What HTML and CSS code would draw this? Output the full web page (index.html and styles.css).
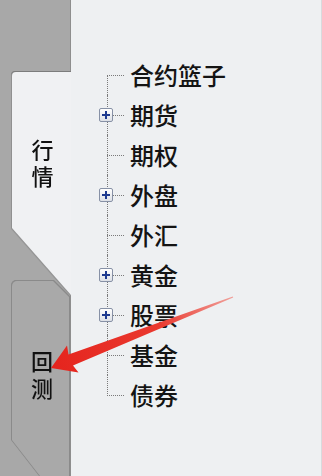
FILE: index.html
```html
<!DOCTYPE html>
<html lang="zh-CN">
<head>
    <meta charset="UTF-8">
    <meta name="viewport" content="width=device-width, initial-scale=1.0">
    <title>行情</title>
    <link rel="stylesheet" href="styles.css">
</head>
<body>
    <div class="window">
        <div class="tabbar">
            <div class="tab tab-active">
                <div class="tab-face"><span class="tab-label">行情</span></div>
            </div>
            <div class="tab tab-idle">
                <div class="tab-face"><span class="tab-label">回测</span></div>
            </div>
        </div>
        <div class="panel">
            <ul class="tree">
                <li class="node">合约篮子</li>
                <li class="node"><span class="toggle"></span>期货</li>
                <li class="node">期权</li>
                <li class="node"><span class="toggle"></span>外盘</li>
                <li class="node">外汇</li>
                <li class="node"><span class="toggle"></span>黄金</li>
                <li class="node"><span class="toggle"></span>股票</li>
                <li class="node">基金</li>
                <li class="node">债券</li>
            </ul>
        </div>
        <svg class="arrow" viewBox="0 0 322 476" width="322" height="476">
            <defs>
                <linearGradient id="arrowFill" x1="51" y1="368" x2="233" y2="297" gradientUnits="userSpaceOnUse">
                    <stop offset="0" stop-color="#e5241d"/>
                    <stop offset="0.6" stop-color="#ea3a30"/>
                    <stop offset="1" stop-color="#f0a09a"/>
                </linearGradient>
            </defs>
            <polygon fill="url(#arrowFill)" points="51,368 78.5,372.5 73,365.5 233.2,297.6 232.8,296.6 68.5,354.5 67,345.5"/>
        </svg>
    </div>
</body>
</html>
```

FILE: styles.css
```css
body {
    margin: 0;
    font-family: "Noto Sans CJK SC", "Noto Sans", sans-serif;
}

.window {
    position: relative;
    width: 322px;
    height: 476px;
    display: flex;
    overflow: hidden;
    background-color: #eef0f2;
}

/* left tab strip */
.tabbar {
    width: 71px;
    flex-shrink: 0;
    display: flex;
    flex-direction: column;
    padding: 72px 0 0 12px;
    box-sizing: border-box;
    background-color: #a8a8a8;
    box-shadow: inset -1px 0 0 #8e8e8e;
}

.tab-face {
    display: flex;
    justify-content: center;
    align-items: flex-start;
    box-sizing: border-box;
}

.tab-label {
    writing-mode: vertical-rl;
    font-size: 22px;
    line-height: 24px;
    letter-spacing: 5px;
    font-weight: 500;
    color: #111;
}

.tab-active {
    filter: drop-shadow(-1px 0 0 #909090) drop-shadow(0 -1px 0 #7c7c7c) drop-shadow(0 1px 0 #9a9a9a);
    position: relative;
    z-index: 1;
}

.tab-active .tab-face {
    width: 59px;
    height: 223px;
    padding: 67px 0 0 2px;
    background-color: #f0f1f3;
    border-radius: 4px 0 0 0;
    clip-path: polygon(0 0, 100% 0, 100% 100%, 0 156px);
}

.tab-idle {
    margin-top: -14px;
    flex: 1;
    filter: drop-shadow(-1px 0 0 #8a8a8a) drop-shadow(0 -1px 0 #8a8a8a) drop-shadow(1px 0 0 #8a8a8a);
}

.tab-idle .tab-face {
    width: 57px;
    height: 100%;
    padding: 70px 0 0 3px;
    background-color: #a9a9a9;
    border-radius: 5px 0 0 0;
    clip-path: polygon(0 0, 41px 0, 100% 16px, 100% 100%, 28px 100%, 0 159px);
}

/* tree */
.panel {
    flex: 1;
    padding-top: 55px;
    border-right: 1px solid #d8dadd;
}

.tree {
    list-style: none;
    margin: 0;
    padding: 0 0 0 59px;
}

.node {
    position: relative;
    height: 40px;
    line-height: 40px;
    font-size: 24px;
    font-weight: 500;
    color: #141414;
}

.node::before {
    content: "";
    position: absolute;
    left: -23px;
    top: 20px;
    width: 17px;
    border-top: 1px dotted #7a7a7a;
}

.node::after {
    content: "";
    position: absolute;
    left: -23px;
    top: 0;
    height: 40px;
    border-left: 1px dotted #7a7a7a;
}

.node:first-child::after {
    top: 20px;
    height: 20px;
}

.node:last-child::after {
    height: 21px;
}

.toggle {
    position: absolute;
    left: -31px;
    top: 13px;
    width: 12px;
    height: 12px;
    z-index: 1;
    border: 1px solid #8791a6;
    border-radius: 2px;
    background:
        linear-gradient(#1d3a8f, #1d3a8f) center / 8px 2px no-repeat,
        linear-gradient(#1d3a8f, #1d3a8f) center / 2px 8px no-repeat,
        linear-gradient(#ffffff, #dde0e6);
}

.arrow {
    position: absolute;
    top: 0;
    left: 0;
    pointer-events: none;
    z-index: 2;
}
```
